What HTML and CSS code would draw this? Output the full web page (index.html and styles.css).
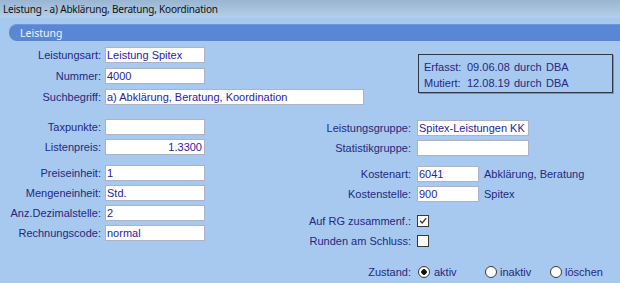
FILE: index.html
```html
<!DOCTYPE html>
<html lang="de">

<head>
    <meta charset="UTF-8">
    <meta name="viewport" content="width=device-width, initial-scale=1.0">
    <title>Leistung</title>
    <link rel="stylesheet" href="styles.css">
</head>

<body>
    <div class="titlebar">Leistung - a) Abklärung, Beratung, Koordination</div>

    <div class="panel">
        <div class="section_head">Leistung</div>

        <div class="top">
            <div class="fields">
                <div class="row">
                    <label class="lbl">Leistungsart:</label>
                    <input type="text" class="inp w100" value="Leistung Spitex">
                </div>
                <div class="row">
                    <label class="lbl">Nummer:</label>
                    <input type="text" class="inp w100" value="4000">
                </div>
                <div class="row">
                    <label class="lbl">Suchbegriff:</label>
                    <input type="text" class="inp w259" value="a) Abklärung, Beratung, Koordination">
                </div>
            </div>

            <!-- Erfasst / Mutiert -->
            <div class="info">
                <div class="info_line">
                    <span class="info_lbl">Erfasst:</span>
                    <span class="info_date">09.06.08</span>
                    <span class="info_by">durch</span>
                    <span>DBA</span>
                </div>
                <div class="info_line">
                    <span class="info_lbl">Mutiert:</span>
                    <span class="info_date">12.08.19</span>
                    <span class="info_by">durch</span>
                    <span>DBA</span>
                </div>
            </div>
        </div>

        <div class="mid">
            <div class="col_left">
                <div class="row">
                    <label class="lbl">Taxpunkte:</label>
                    <input type="text" class="inp w100" value="">
                </div>
                <div class="row">
                    <label class="lbl">Listenpreis:</label>
                    <input type="text" class="inp w100 right" value="1.3300">
                </div>
                <div class="row gap6">
                    <label class="lbl">Preiseinheit:</label>
                    <input type="text" class="inp w100" value="1">
                </div>
                <div class="row">
                    <label class="lbl">Mengeneinheit:</label>
                    <input type="text" class="inp w100" value="Std.">
                </div>
                <div class="row">
                    <label class="lbl">Anz.Dezimalstelle:</label>
                    <input type="text" class="inp w100" value="2">
                </div>
                <div class="row">
                    <label class="lbl">Rechnungscode:</label>
                    <input type="text" class="inp w100" value="normal">
                </div>
            </div>

            <div class="col_right">
                <div class="row">
                    <label class="lbl2">Leistungsgruppe:</label>
                    <input type="text" class="inp w112" value="Spitex-Leistungen KK">
                </div>
                <div class="row">
                    <label class="lbl2">Statistikgruppe:</label>
                    <input type="text" class="inp w112" value="">
                </div>
                <div class="row gap6">
                    <label class="lbl2">Kostenart:</label>
                    <input type="text" class="inp w62" value="6041">
                    <span class="extra">Abklärung, Beratung</span>
                </div>
                <div class="row">
                    <label class="lbl2">Kostenstelle:</label>
                    <input type="text" class="inp w62" value="900">
                    <span class="extra">Spitex</span>
                </div>
                <div class="row gap7">
                    <label class="lbl2">Auf RG zusammenf.:</label>
                    <span class="check">
                        <svg width="10" height="10" viewBox="0 0 10 10">
                            <path d="M2 4.8 L4.2 7 L8.2 2.2" fill="none" stroke="#333" stroke-width="1.3"/>
                        </svg>
                    </span>
                </div>
                <div class="row">
                    <label class="lbl2">Runden am Schluss:</label>
                    <span class="check"></span>
                </div>
                <div class="row gap10">
                    <label class="lbl2">Zustand:</label>
                    <span class="opt opt1"><span class="radio on"></span>aktiv</span>
                    <span class="opt opt2"><span class="radio"></span>inaktiv</span>
                    <span class="opt"><span class="radio"></span>löschen</span>
                </div>
            </div>
        </div>
    </div>
</body>

</html>
```

FILE: styles.css
```css
* {
    margin: 0;
    padding: 0;
    box-sizing: border-box;
}

body {
    width: 620px;
    height: 283px;
    overflow: hidden;
    background-color: #a7c9ef;
    font-family: "Liberation Sans", Arial, sans-serif;
    font-size: 11px;
    color: #25287e;
}

.titlebar {
    height: 18px;
    line-height: 18px;
    padding-left: 3px;
    font-family: "Noto Sans", sans-serif;
    font-size: 10px;
    letter-spacing: -0.2px;
    color: #111;
    background: linear-gradient(#99b5d1, #b5cfe9);
}

.panel {
    padding-top: 6px;
}

.section_head {
    margin-left: 9px;
    height: 17px;
    line-height: 16px;
    padding-left: 11px;
    font-family: "Noto Sans", sans-serif;
    font-size: 10.5px;
    color: #eef3fc;
    background-color: #5a87d4;
    border-top: 1px solid #6c97dc;
    border-radius: 8px 0 0 8px;
}

.top {
    display: flex;
    padding-top: 6px;
}

.fields {
    display: flex;
    flex-direction: column;
    gap: 5px;
}

.row {
    display: flex;
    align-items: center;
    height: 16px;
}

.lbl {
    width: 101px;
    margin-right: 4px;
    text-align: right;
    white-space: nowrap;
}

.lbl2 {
    width: 111px;
    margin-right: 6px;
    text-align: right;
    white-space: nowrap;
}

.inp {
    height: 16px;
    padding: 0 2px 0 1px;
    font-family: "Liberation Sans", Arial, sans-serif;
    font-size: 11px;
    color: #2b1ca2;
    background-color: #fff;
    border: 1px solid #aab4c4;
    outline: none;
}

.right {
    text-align: right;
}

.w100 {
    width: 100px;
}

.w112 {
    width: 112px;
}

.w62 {
    width: 62px;
}

.w259 {
    width: 259px;
}

.info {
    margin-left: 54px;
    margin-top: 7px;
    width: 195px;
    height: 39px;
    padding: 4px 0 0 5px;
    border: 1px solid #2e3846;
    box-shadow: 1px 1px 0 #7f93ab;
}

.info_line {
    display: flex;
    height: 16px;
    line-height: 16px;
}

.info_lbl {
    width: 43px;
}

.info_date {
    width: 47px;
}

.info_by {
    width: 32px;
}

.mid {
    display: flex;
    margin-top: 14px;
}

.col_left {
    width: 300px;
    display: flex;
    flex-direction: column;
    gap: 4px;
}

.col_right {
    display: flex;
    flex-direction: column;
    gap: 4px;
    padding-top: 1px;
}

.gap6 {
    margin-top: 6px;
}

.gap7 {
    margin-top: 7px;
}

.gap10 {
    margin-top: 11px;
}

.extra {
    margin-left: 5px;
    white-space: nowrap;
}

.check {
    display: flex;
    align-items: center;
    justify-content: center;
    width: 12px;
    height: 12px;
    background-color: #fff;
    border: 1px solid #3a3a3a;
}

.opt {
    display: flex;
    align-items: center;
    white-space: nowrap;
}

.opt1 {
    width: 67px;
    margin-left: 1px;
}

.opt2 {
    width: 65px;
}

.radio {
    width: 12px;
    height: 12px;
    margin-right: 3px;
    border: 1px solid #3a3a3a;
    border-radius: 50%;
    background-color: #fff;
}

.radio.on {
    background: radial-gradient(circle, #111 0, #111 2.5px, #fff 3px);
    margin-right: 4px;
}
```
